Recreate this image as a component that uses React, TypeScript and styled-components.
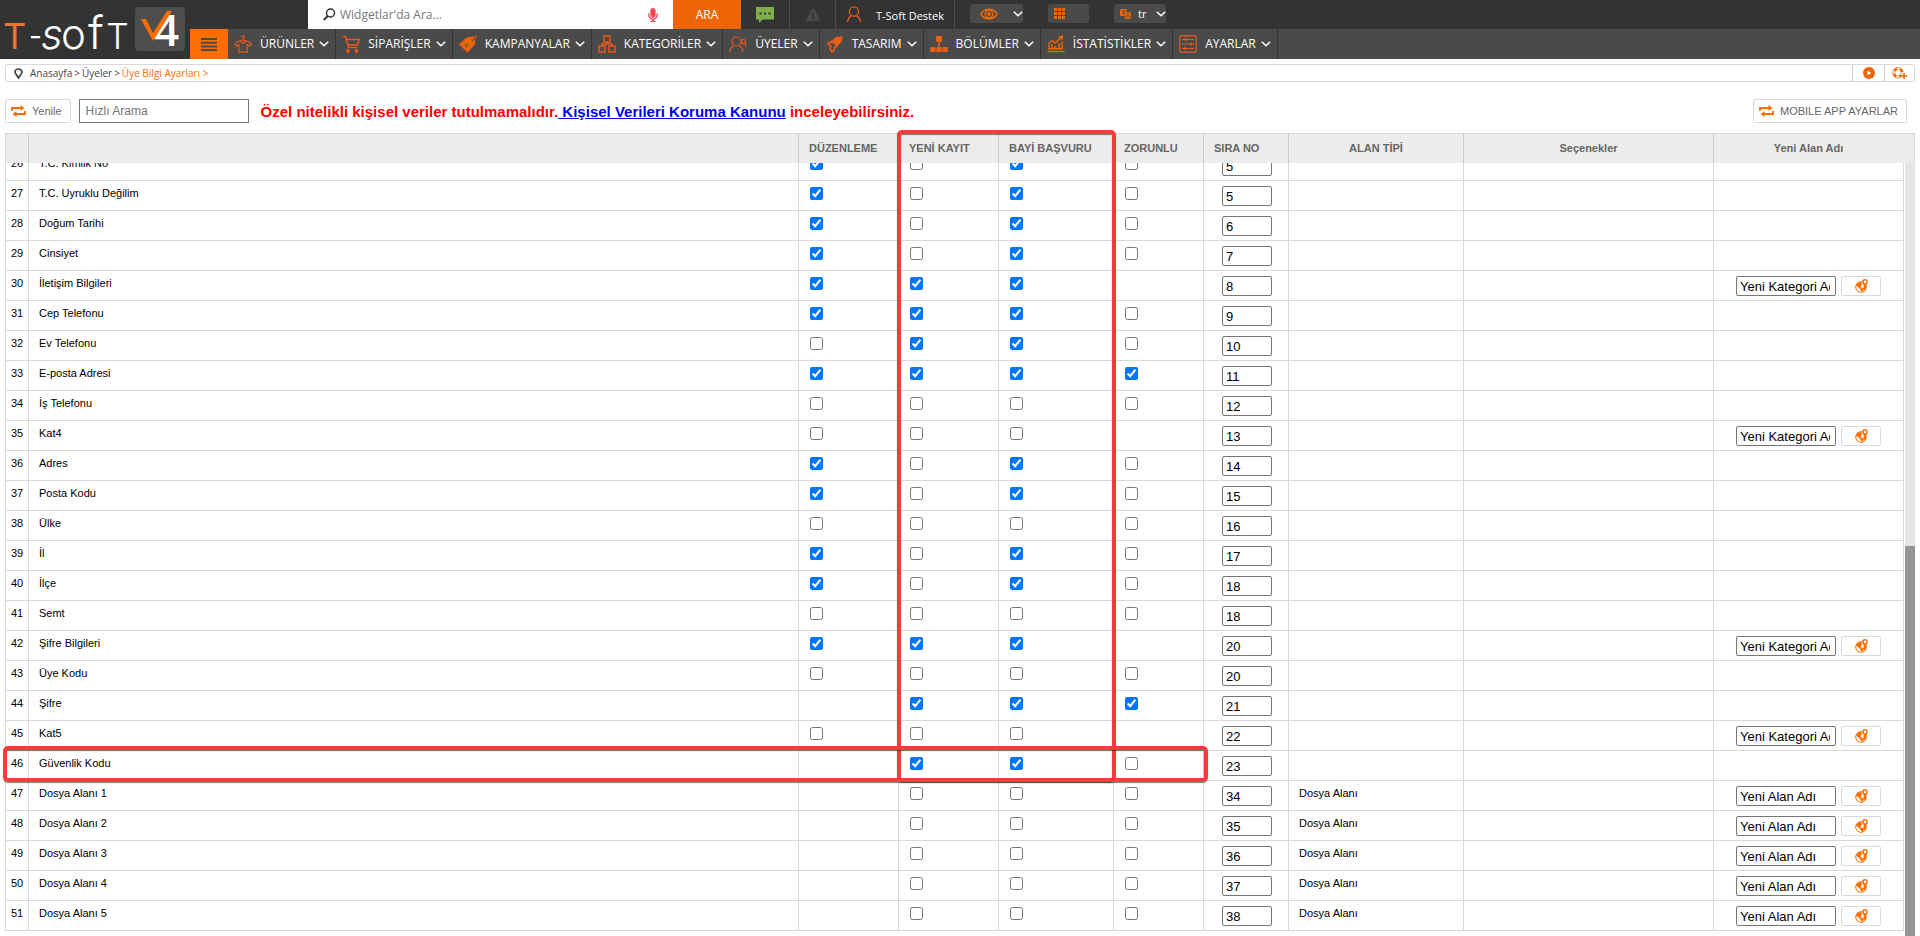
import React, { useLayoutEffect, useRef } from "react";
import styled, { createGlobalStyle } from "styled-components";
import { FaExclamationTriangle, FaMicrophone } from "react-icons/fa";

const ORANGE = "#ec6608";
const BRIGHT = "#ff6c00";
const LINE = "#d9d9d9";
const ARIAL = `"Liberation Sans", Arial, sans-serif`;
const OPEN = `"Open Sans", sans-serif`;

const GlobalStyle = createGlobalStyle`
  *, *::before, *::after { box-sizing: border-box; }
  body { margin: 0; background: #fff; font-family: ${ARIAL}; font-size: 11px; color: #000; }
  button, input, select { font: inherit; margin: 0; }
  a { color: inherit; text-decoration: none; }
`;

const Page = styled.div`
  display: flex;
  flex-direction: column;
  height: 100vh;
  overflow: hidden;
`;

/* ---------- header ---------- */

const Header = styled.header`
  display: flex;
  flex: none;
  height: 59px;
  background: #333;
  font-family: ${OPEN};
  color: #fff;
`;

const LogoLink = styled.a`
  flex: none;
  width: 190px;
  height: 59px;
  svg { display: block; overflow: visible; }
`;

const HeaderMain = styled.div`
  flex: 1;
  min-width: 0;
  display: flex;
  flex-direction: column;
`;

const TopBar = styled.div`
  display: flex;
  align-items: stretch;
  height: 29px;
  padding-left: 118px;
`;

const SearchBox = styled.form`
  display: flex;
  width: 433px;
`;

const SearchField = styled.label`
  flex: 1;
  display: flex;
  align-items: center;
  gap: 4px;
  padding: 0 13px 0 15px;
  background: #fff;
`;

const SearchInput = styled.input`
  flex: 1;
  min-width: 0;
  border: 0;
  outline: 0;
  padding: 0;
  height: 29px;
  font-size: 12px;
  color: #444;
  background: transparent;
  &::placeholder { color: #777; }
`;

const SearchButton = styled.button`
  width: 68px;
  border: 0;
  background: ${ORANGE};
  color: #fff;
  font-size: 12px;
`;

const TopItem = styled.button<{ $width: number }>`
  width: ${(p) => p.$width}px;
  border: 0;
  border-right: 1px solid #4d4d4d;
  padding: 0;
  background: transparent;
  color: #fff;
  display: flex;
  align-items: center;
  justify-content: center;
  gap: 12px;
  font-size: 11px;
`;

const UserName = styled.span`
  padding: 1px 0 0 2px;
`;

const Tools = styled.div`
  display: flex;
  align-items: flex-start;
  gap: 25px;
  padding: 4px 15px;
`;

const ToolButton = styled.button<{ $width: number; $inset: number }>`
  width: ${(p) => p.$width}px;
  height: 19px;
  border: 0;
  border-radius: 3px;
  background: #4a4a4a;
  padding: 0 0 0 ${(p) => p.$inset}px;
  display: flex;
  align-items: center;
  justify-content: space-between;
`;

const LanguageBox = styled.label`
  width: 52px;
  height: 19px;
  border-radius: 3px;
  background: #4a4a4a;
  padding-left: 6px;
  display: flex;
  align-items: center;
`;

const LanguageSelect = styled.select`
  appearance: none;
  border: 0;
  outline: 0;
  padding: 0 0 0 7px;
  flex: 1;
  min-width: 0;
  height: 19px;
  background: transparent;
  color: #fff;
  font-size: 11px;
`;

const Nav = styled.nav`
  display: flex;
  height: 30px;
  background: #4a4a4a;
`;

const MenuButton = styled.button`
  width: 38px;
  border: 0;
  padding: 0;
  background: ${BRIGHT};
  display: flex;
  align-items: center;
  justify-content: center;
`;

const NavItem = styled.a`
  display: flex;
  align-items: center;
  padding: 0 6px;
  border-right: 1px solid #333;
  font-size: 12px;
  white-space: nowrap;
`;

const NavLabel = styled.span`
  padding: 0 5px 2px 8px;
`;

/* ---------- breadcrumb and toolbar ---------- */

const Breadcrumb = styled.div`
  flex: none;
  display: flex;
  align-items: stretch;
  height: 18px;
  margin: 5px 5px 0;
  border: 1px solid ${LINE};
  border-radius: 2px;
  font-family: ${OPEN};
  font-size: 10px;
  color: #444;
`;

const Trail = styled.div`
  flex: 1;
  display: flex;
  align-items: center;
  gap: 2px;
  padding-left: 8px;
  white-space: nowrap;
  svg { margin-right: 5px; }
`;

const Current = styled.a`
  color: ${BRIGHT};
`;

const CrumbAction = styled.button<{ $width: number }>`
  width: ${(p) => p.$width}px;
  border: 0;
  border-left: 1px solid #ccc;
  padding: 0;
  background: #fff;
  display: flex;
  align-items: center;
  justify-content: center;
`;

const Toolbar = styled.div`
  flex: none;
  display: flex;
  align-items: center;
  height: 24px;
  margin: 17px 13px 10px 5px;
`;

const OutlineButton = styled.button`
  display: flex;
  align-items: center;
  gap: 6px;
  height: 24px;
  border: 1px solid ${LINE};
  border-radius: 2px;
  padding: 0 8px 0 5px;
  background: #fff;
  color: #666;
  font-size: 11px;
  white-space: nowrap;
`;

const QuickSearch = styled.input`
  width: 170px;
  height: 24px;
  margin: 0 12px 0 8px;
  border: 1px solid #767676;
  outline: 0;
  padding: 0 6px;
  font-size: 12px;
  color: #000;
  &::placeholder { color: #757575; }
`;

const Warning = styled.p`
  flex: 1;
  margin: 0;
  font-size: 15px;
  font-weight: bold;
  color: #f00;
  white-space: pre;
  a { color: #00e; text-decoration: underline; }
`;

/* ---------- table ---------- */

const Panel = styled.section`
  position: relative;
  flex: 1;
  min-height: 0;
  display: flex;
  margin: 0 5px;
`;

const Scroller = styled.div`
  flex: 1;
  min-width: 0;
  overflow-y: auto;
  scrollbar-width: none;
  padding-bottom: 5px;
`;

const Table = styled.table`
  width: 100%;
  table-layout: fixed;
  border-collapse: separate;
  border-spacing: 0;
  border-left: 1px solid ${LINE};
`;

const Th = styled.th<{ $center?: boolean }>`
  position: sticky;
  top: 0;
  z-index: 1;
  height: 30px;
  padding: 0 0 2px ${(p) => (p.$center ? 0 : 10)}px;
  text-align: ${(p) => (p.$center ? "center" : "left")};
  background: #ececec;
  border-top: 1px solid ${LINE};
  border-right: 1px solid #ccc;
  color: #666;
  font-size: 11px;
  white-space: nowrap;
  &:last-child { border-right-color: #ececec; }
`;

const Td = styled.td<{ $pad?: number; $center?: boolean }>`
  height: 30px;
  padding: 5px 0 0 ${(p) => p.$pad ?? 0}px;
  vertical-align: top;
  text-align: ${(p) => (p.$center ? "center" : "left")};
  border-right: 1px solid ${LINE};
  border-bottom: 1px solid ${LINE};
  line-height: 14px;
  white-space: nowrap;
`;

const Check = styled.input`
  display: block;
  width: 13px;
  height: 13px;
  margin: 1px 0 0;
`;

const Field = styled.input<{ $width: number }>`
  display: block;
  width: ${(p) => p.$width}px;
  height: 20px;
  border: 1px solid #767676;
  border-radius: 2px;
  padding: 0 5px 0 3px;
  font-size: 13px;
  color: #000;
  background: #fff;
`;

const NameEditor = styled.div`
  display: flex;
  gap: 5px;
`;

const GlobeButton = styled.button`
  width: 40px;
  height: 20px;
  border: 1px solid ${LINE};
  border-radius: 2px;
  padding: 0;
  background: #fff;
  display: flex;
  align-items: center;
  justify-content: center;
`;

const ScrollColumn = styled.div`
  flex: none;
  width: 11px;
  display: flex;
  flex-direction: column;
`;

const HeadCap = styled.div`
  height: 30px;
  background: #ececec;
  border-top: 1px solid ${LINE};
  border-right: 1px solid ${LINE};
`;

const Track = styled.div`
  flex: 1;
  display: flex;
  flex-direction: column;
  margin-left: 1px;
  background: #e5e5e5;
`;

const TrackSpace = styled.div`
  flex: 383;
`;

const Thumb = styled.div`
  flex: 390;
  background: #959595;
`;

const Marker = styled.div`
  position: absolute;
  z-index: 2;
  border: 4px solid #f43c3c;
  border-radius: 5px;
  box-shadow: 0 1px 1px rgba(0, 0, 0, 0.5), inset 0 1px 1px rgba(0, 0, 0, 0.5);
  pointer-events: none;
`;

const ColumnMarker = styled(Marker)`
  top: -3px;
  bottom: 154px;
  right: 799px;
  width: 219px;
`;

const RowMarker = styled(Marker)`
  left: -2px;
  right: 707px;
  bottom: 154px;
  height: 36px;
`;

/* ---------- icons ---------- */

const Logo = () => (
  <svg width="190" height="59" viewBox="0 0 190 59" role="img" aria-label="T-Soft V4">
    <g fontFamily="Inter, sans-serif" fill="#fff" fontWeight="400">
      <text x="3" y="49" fontSize="36" fill="#f07430">T</text>
      <text x="29" y="46" fontSize="28">-</text>
      <text x="41" y="49" fontSize="42" fontStyle="italic" fontWeight="300">s</text>
      <text x="61" y="49" fontSize="42" fontWeight="300">o</text>
      <text x="88" y="49" fontSize="46" fontWeight="300">f</text>
      <text x="106" y="49" fontSize="36" fontWeight="300">T</text>
    </g>
    <rect x="135" y="7" width="50" height="44" rx="4" fill="#4d4d4d" />
    <text x="154" y="46" fontFamily={OPEN} fontSize="44" fontWeight="600" fill="#fff">4</text>
    <path d="M141 19h5l7 14 14-22h5l-19 30z" fill={BRIGHT} />
  </svg>
);

const Chevron = () => (
  <svg width="10" height="6" viewBox="0 0 10 6" fill="none" stroke="#fff" strokeWidth="1.5">
    <path d="M.8.8 5 4.8 9.200.8" />
  </svg>
);

const Magnifier = () => (
  <svg width="13" height="13" viewBox="0 0 13 13" fill="none" stroke="#333" strokeWidth="1.5">
    <circle cx="7.500" cy="5" r="4" />
    <path d="M4.800 8 .8 12" strokeWidth="2" />
  </svg>
);

const Bubble = () => (
  <svg width="18" height="16" viewBox="0 0 18 16" fill="#7fae4b">
    <path d="M0 0h18v12.500H6.500L3 16v-3.500H0z" />
    <path d="M3.500 5.500h2v2h-2zM8 5.500h2v2H8zM12.500 5.500h2v2h-2z" fill="#333" />
  </svg>
);

const Person = () => (
  <svg width="16" height="17" viewBox="0 0 16 17" fill="none" stroke="#e8591c" strokeWidth="1.300">
    <circle cx="8" cy="5.500" r="4.600" />
    <path d="M1.500 16c.3-3 1.500-5 4-6.200M14.500 16c-.3-3-1.500-5-4-6.200" />
  </svg>
);

const Eye = () => (
  <svg width="18" height="12" viewBox="0 0 18 12" fill="none" stroke={ORANGE}>
    <path d="M.8 6C4.500-.4 13.500-.4 17.200 6c-3.700 6.400-12.700 6.400-16.400 0z" strokeWidth="1.500" />
    <circle cx="9" cy="6" r="3.800" strokeWidth="1.500" />
    <circle cx="9" cy="6" r="1.500" fill={ORANGE} />
  </svg>
);

const GridIcon = () => (
  <svg width="11" height="11" viewBox="0 0 11 11" fill={ORANGE}>
    {[0, 4, 8].map((y) => [0, 4, 8].map((x) => <rect key={`${x}-${y}`} x={x} y={y} width="3" height="3" />))}
  </svg>
);

const LanguageIcon = () => (
  <svg width="11" height="10" viewBox="0 0 11 10">
    <rect width="7" height="7" rx="1" fill={ORANGE} />
    <path d="M1.500 2h4M3.500 1.200v1M2 5c1.500-.5 2.500-1.500 3-3M2.500 3l2 2" stroke="#4a4a4a" strokeWidth=".7" fill="none" />
    <rect x="4.500" y="3" width="6.500" height="7" rx="1" fill={ORANGE} stroke="#4a4a4a" strokeWidth=".5" />
    <path d="M6 8.500 7.700 4.500 9.400 8.500M6.700 7.200h2" stroke="#4a4a4a" strokeWidth=".7" fill="none" />
  </svg>
);

const Bars = () => (
  <svg width="16" height="13" viewBox="0 0 16 13" fill="#4a4a4a">
    <path d="M0 0h16v2H0zM0 3.700h16v2H0zM0 7.400h16v2H0zM0 11h16v2H0z" />
  </svg>
);

const navSvg = { width: 18, height: 18, viewBox: "0 0 18 18", fill: "none", stroke: "#e8591c", strokeWidth: 1.2 };

const ShirtIcon = () => (
  <svg {...navSvg}>
    <path d="M7.700 2.300a1.400 1.400 0 1 1 1.900 1.200c-.5.3-.6.600-.6 1.500L3.500 6.500.8 9.300l2 2 2-1.500v7.400h8.500V9.800l2 1.500 2-2-2.800-2.800L9 5M6 6l3 2.500L12 6" />
  </svg>
);
const CartIcon = () => (
  <svg {...navSvg} strokeWidth={1.4}>
    <path d="M.5 1.500h3l3 11h9M4.500 4.500h12.700l-1.700 5.500H6" />
    <circle cx="6" cy="16" r="1.200" fill="#e8591c" />
    <circle cx="14.500" cy="16" r="1.200" fill="#e8591c" />
  </svg>
);
const TagIcon = () => (
  <svg {...navSvg}>
    <path d="M.8 9.500 8 2.800 14 2l2 1.500-.5 5.800-7 7.500z" fill={ORANGE} />
    <path d="M18 1.500 13 5.500" stroke="#4a4a4a" strokeWidth="1.800" />
    <path d="M17.800.8 13 4.800" />
    <path d="m6 8.500 1 3M9.500 8l-2.500 5M9.500 11l.8.800" stroke="#4a4a4a" strokeWidth=".8" />
  </svg>
);
const BoxesIcon = () => (
  <svg {...navSvg} strokeWidth={1.5}>
    <path d="M6 1h6v6H6zM1 11h6v6H1zM11 11h6v6h-6zM9 7v2M4 11V9h10v2" />
  </svg>
);
const MembersIcon = () => (
  <svg {...navSvg}>
    <circle cx="7.500" cy="6.500" r="4.500" />
    <path d="M.8 17c.2-3 1.400-5 4-6.200M14 17c-.2-3-1.300-5-3.800-6.200" />
    <circle cx="14.500" cy="6.500" r="2" />
    <path d="M17.300 12c-.2-1.800-.8-2.800-1.800-3.600" />
  </svg>
);
const BrushIcon = () => (
  <svg {...navSvg} strokeLinejoin="round">
    <path d="M16 1.500 14 5l2-.5-2.500 4-3 1.500L7 6.500 9.500 3l3-1-.5 2z" fill={ORANGE} strokeWidth="1.400" />
    <path d="M6 6 1.800 8.800l3 2.200-.6 3L6 17l2.500-2.500-.2-2 3-1.500z" strokeWidth="1.800" />
  </svg>
);
const SectionsIcon = () => (
  <svg {...navSvg} fill={ORANGE}>
    <path d="M6.500 1.500h5v5h-5zM.8 12.500h4v4h-4zM7 12.500h4v4H7zM13.200 12.500h4v4h-4z" />
    <path d="M9 6v7M3 14.500h12" fill="none" strokeWidth="1.600" />
  </svg>
);
const ChartIcon = () => (
  <svg {...navSvg} stroke={ORANGE}>
    <path d="M2 14.500V8l3-2.500L8 8l7-6M11.500 2.500l4-1.200-.6 4M15 6.500v8M2 13.800h13M.5 16.500h17" strokeWidth="1.400" />
    <path d="M5 13V9M8 13v-2M12 13V8" strokeWidth="1.500" />
  </svg>
);
const SlidersIcon = () => (
  <svg {...navSvg}>
    <rect x=".8" y=".8" width="16.400" height="16.400" rx="1" />
    <path d="M3 4.500h12M3 9h12M3 13.500h12" />
    <path d="M7 3.200v2.600M12 7.700v2.600M6 12.200v2.600" strokeWidth="2.200" />
  </svg>
);

const PinIcon = () => (
  <svg width="9" height="11" viewBox="0 0 9 11" fill="none" stroke="#444" strokeWidth="1.700">
    <path d="M4.500 10C3.500 7.500 1 6 1 4a3.500 3 0 0 1 7 0c0 2-2.500 3.500-3.500 6z" />
  </svg>
);

const PlayIcon = () => (
  <svg width="12" height="12" viewBox="0 0 12 12">
    <circle cx="6" cy="6" r="6" fill={ORANGE} />
    <path d="M4.500 3.800 8.300 6 4.500 8.200z" fill="#fff" />
  </svg>
);

const SupportIcon = () => (
  <svg width="15" height="12" viewBox="0 0 15 12" fill="none" stroke={ORANGE}>
    <circle cx="6" cy="5.800" r="3.200" strokeWidth=".7" />
    <circle cx="6" cy="5.800" r="5.300" strokeWidth=".7" />
    <circle cx="6" cy="5.800" r="4.300" strokeWidth="2.200" strokeDasharray="3.400 3.354" strokeDashoffset="5" />
    <path d="M12 5.500v6.500M9 8.800h6" stroke="#fff" strokeWidth="3" />
    <path d="M12 6v6M9 9h6" strokeWidth="1.500" />
  </svg>
);

const RepeatIcon = () => (
  <svg width="15" height="12" viewBox="0 0 15 12" fill="none" stroke={BRIGHT} strokeWidth="1.800">
    <path d="M1 6V3h9M14 6v3H5" />
    <path d="M9.500 0 13.500 3 9.500 6zM5.500 6 1.500 9l4 3z" fill={BRIGHT} stroke="none" />
  </svg>
);

const GlobePinIcon = () => (
  <svg width="13" height="14" viewBox="0 0 13 14">
    <circle cx="6" cy="8" r="5.300" fill="#fff" stroke={BRIGHT} strokeWidth="1" />
    <path d="M.8 7 2.800 3.500l3.500-.5.7 2.500-1.500 1.500 1 1.500-2 1L2.500 7.500zM4.500 10l2.500-1.500 2 1.500L7.500 13zM8.500 7l2.700.5-1 4-1.700-1.500z" fill={BRIGHT} />
    <path d="M10 8.500C9.500 6.500 7.200 5 7.200 2.900a2.800 2.800 0 0 1 5.600 0c0 2.100-2.300 3.600-2.800 5.600z" fill={BRIGHT} />
    <circle cx="10" cy="2.900" r="1.300" fill="#fff" />
  </svg>
);

/* ---------- data ---------- */

const NAV = [
  { label: "ÜRÜNLER", Icon: ShirtIcon },
  { label: "SİPARİŞLER", Icon: CartIcon },
  { label: "KAMPANYALAR", Icon: TagIcon },
  { label: "KATEGORİLER", Icon: BoxesIcon },
  { label: "ÜYELER", Icon: MembersIcon },
  { label: "TASARIM", Icon: BrushIcon },
  { label: "BÖLÜMLER", Icon: SectionsIcon },
  { label: "İSTATİSTİKLER", Icon: ChartIcon },
  { label: "AYARLAR", Icon: SlidersIcon },
];

const CHECK_COLUMNS = ["DÜZENLEME", "YENİ KAYIT", "BAYİ BAŞVURU", "ZORUNLU"];
const COLUMN_WIDTHS = [23, 0, 100, 100, 115, 90, 85, 175, 250, 190];
const CATEGORY = "Yeni Kategori Adı";
const FIELD = "Yeni Alan Adı";

/* flags, one per check column: 1 ticked, 0 clear, - no box */
type Row = { no: number; name: string; flags: string; order: number; type?: string; rename?: string };

const ROWS: Row[] = [
  { no: 26, name: "T.C. Kimlik No", flags: "1010", order: 5 },
  { no: 27, name: "T.C. Uyruklu Değilim", flags: "1010", order: 5 },
  { no: 28, name: "Doğum Tarihi", flags: "1010", order: 6 },
  { no: 29, name: "Cinsiyet", flags: "1010", order: 7 },
  { no: 30, name: "İletişim Bilgileri", flags: "111-", order: 8, rename: CATEGORY },
  { no: 31, name: "Cep Telefonu", flags: "1110", order: 9 },
  { no: 32, name: "Ev Telefonu", flags: "0110", order: 10 },
  { no: 33, name: "E-posta Adresi", flags: "1111", order: 11 },
  { no: 34, name: "İş Telefonu", flags: "0000", order: 12 },
  { no: 35, name: "Kat4", flags: "000-", order: 13, rename: CATEGORY },
  { no: 36, name: "Adres", flags: "1010", order: 14 },
  { no: 37, name: "Posta Kodu", flags: "1010", order: 15 },
  { no: 38, name: "Ülke", flags: "0000", order: 16 },
  { no: 39, name: "İl", flags: "1010", order: 17 },
  { no: 40, name: "İlçe", flags: "1010", order: 18 },
  { no: 41, name: "Semt", flags: "0000", order: 18 },
  { no: 42, name: "Şifre Bilgileri", flags: "111-", order: 20, rename: CATEGORY },
  { no: 43, name: "Üye Kodu", flags: "0000", order: 20 },
  { no: 44, name: "Şifre", flags: "-111", order: 21 },
  { no: 45, name: "Kat5", flags: "000-", order: 22, rename: CATEGORY },
  { no: 46, name: "Güvenlik Kodu", flags: "-110", order: 23 },
  ...[1, 2, 3, 4, 5].map((n) => ({
    no: 46 + n,
    name: `Dosya Alanı ${n}`,
    flags: "-000",
    order: 33 + n,
    type: "Dosya Alanı",
    rename: FIELD,
  })),
];

const FieldRow = ({ row }: { row: Row }) => (
  <tr>
    <Td $center>{row.no}</Td>
    <Td $pad={10}>{row.name}</Td>
    {row.flags.split("").map((flag, i) => (
      <Td key={CHECK_COLUMNS[i]} $pad={11}>
        {flag !== "-" && (
          <Check type="checkbox" defaultChecked={flag === "1"} aria-label={`${row.name} ${CHECK_COLUMNS[i]}`} />
        )}
      </Td>
    ))}
    <Td $pad={18}>
      <Field $width={50} type="text" defaultValue={row.order} aria-label={`${row.name} SIRA NO`} />
    </Td>
    <Td $pad={10}>{row.type}</Td>
    <Td />
    <Td $pad={22}>
      {row.rename && (
        <NameEditor>
          <Field $width={100} type="text" defaultValue={row.rename} aria-label={`${row.name} Yeni Alan Adı`} />
          <GlobeButton type="button" aria-label="Çeviri">
            <GlobePinIcon />
          </GlobeButton>
        </NameEditor>
      )}
    </Td>
  </tr>
);

export default function App() {
  const scroller = useRef<HTMLDivElement>(null);

  useLayoutEffect(() => {
    if (scroller.current) scroller.current.scrollTop = scroller.current.scrollHeight;
  }, []);

  return (
    <Page>
      <GlobalStyle />
      <Header>
        <LogoLink href="#" aria-label="T-Soft">
          <Logo />
        </LogoLink>
        <HeaderMain>
          <TopBar>
            <SearchBox onSubmit={(e) => e.preventDefault()}>
              <SearchField>
                <Magnifier />
                <SearchInput type="text" placeholder="Widgetlar'da Ara..." aria-label="Widgetlar'da Ara" />
                <FaMicrophone size={14} color="#ef4550" />
              </SearchField>
              <SearchButton type="submit">ARA</SearchButton>
            </SearchBox>
            <TopItem type="button" $width={49} aria-label="Mesajlar">
              <Bubble />
            </TopItem>
            <TopItem type="button" $width={46} aria-label="Uyarılar">
              <FaExclamationTriangle size={14} color="#4a4a4a" />
            </TopItem>
            <TopItem type="button" $width={119}>
              <Person />
              <UserName>T-Soft Destek</UserName>
            </TopItem>
            <Tools>
              <ToolButton type="button" $width={53} $inset={10} aria-label="Görünüm">
                <Eye />
                <Chevron />
              </ToolButton>
              <ToolButton type="button" $width={41} $inset={6} aria-label="Uygulamalar">
                <GridIcon />
              </ToolButton>
              <LanguageBox>
                <LanguageIcon />
                <LanguageSelect aria-label="Dil" defaultValue="tr">
                  <option value="tr">tr</option>
                </LanguageSelect>
                <Chevron />
              </LanguageBox>
            </Tools>
          </TopBar>
          <Nav>
            <MenuButton type="button" aria-label="Menü">
              <Bars />
            </MenuButton>
            {NAV.map(({ label, Icon }) => (
              <NavItem key={label} href="#">
                <Icon />
                <NavLabel>{label}</NavLabel>
                <Chevron />
              </NavItem>
            ))}
          </Nav>
        </HeaderMain>
      </Header>

      <Breadcrumb>
        <Trail>
          <PinIcon />
          <a href="#">Anasayfa</a>
          <span>&gt;</span>
          <a href="#">Üyeler</a>
          <span>&gt;</span>
          <Current href="#">{"Üye Bilgi Ayarları >"}</Current>
        </Trail>
        <CrumbAction type="button" $width={32} aria-label="Video">
          <PlayIcon />
        </CrumbAction>
        <CrumbAction type="button" $width={30} aria-label="Destek">
          <SupportIcon />
        </CrumbAction>
      </Breadcrumb>

      <Toolbar>
        <OutlineButton type="button">
          <RepeatIcon />
          Yenile
        </OutlineButton>
        <QuickSearch type="text" placeholder="Hızlı Arama" aria-label="Hızlı Arama" autoFocus />
        <Warning>
          Özel nitelikli kişisel veriler tutulmamalıdır.
          <a href="#">{" Kişisel Verileri Koruma Kanunu"}</a>
          {" inceleyebilirsiniz."}
        </Warning>
        <OutlineButton type="button">
          <RepeatIcon />
          MOBILE APP AYARLAR
        </OutlineButton>
      </Toolbar>

      <Panel>
        <Scroller ref={scroller}>
          <Table>
            <colgroup>
              {COLUMN_WIDTHS.map((width, i) => (
                <col key={i} width={width || undefined} />
              ))}
            </colgroup>
            <thead>
              <tr>
                <Th />
                <Th />
                {CHECK_COLUMNS.map((label) => (
                  <Th key={label}>{label}</Th>
                ))}
                <Th>SIRA NO</Th>
                <Th $center>ALAN TİPİ</Th>
                <Th $center>Seçenekler</Th>
                <Th $center>Yeni Alan Adı</Th>
              </tr>
            </thead>
            <tbody>
              {ROWS.map((row) => (
                <FieldRow key={row.no} row={row} />
              ))}
            </tbody>
          </Table>
        </Scroller>
        <ScrollColumn>
          <HeadCap />
          <Track>
            <TrackSpace />
            <Thumb />
          </Track>
        </ScrollColumn>
        <ColumnMarker />
        <RowMarker />
      </Panel>
    </Page>
  );
}
